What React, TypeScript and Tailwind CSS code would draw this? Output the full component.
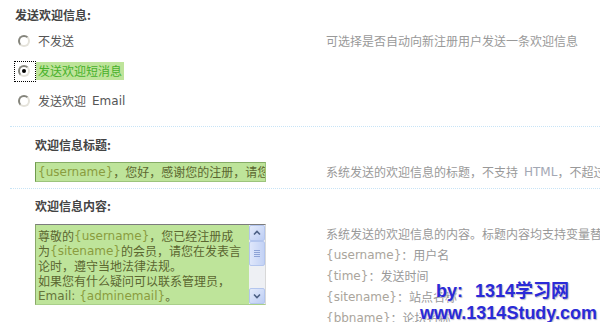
import React from "react";

const cjk = '"Noto Sans CJK SC", "DejaVu Sans", sans-serif';
const latin = '"DejaVu Sans", "Noto Sans CJK SC", sans-serif';

function Radio({ checked }: { checked?: boolean }) {
  return (
    <span className="relative inline-flex w-[12px] h-[12px] shrink-0 rounded-full border-2 border-t-[#85857c] border-l-[#85857c] border-r-[#e4e2da] border-b-[#e4e2da] bg-white items-center justify-center">
      {checked && <span className="block w-[4px] h-[4px] rounded-full bg-black" />}
    </span>
  );
}

function Var({ children, c = "text-[#8a9c3e]" }: { children: React.ReactNode; c?: string }) {
  return (
    <span className={c} style={{ fontFamily: latin }}>
      {children}
    </span>
  );
}

function ScrollBtn({ dir }: { dir: "up" | "down" }) {
  return (
    <div className="w-[16px] h-[16px] shrink-0 rounded-[2px] border border-[#b4c6ee] bg-[linear-gradient(135deg,#e4ebfb,#bccdf4)] flex items-center justify-center">
      <svg width="8" height="6" viewBox="0 0 8 6">
        {dir === "up" ? (
          <path d="M1 4.5 L4 1.5 L7 4.5" fill="none" stroke="#4d6185" strokeWidth="1.6" />
        ) : (
          <path d="M1 1.5 L4 4.5 L7 1.5" fill="none" stroke="#4d6185" strokeWidth="1.6" />
        )}
      </svg>
    </div>
  );
}

function Line({ children }: { children: React.ReactNode }) {
  return <div className="h-[15px] flex items-center">{children}</div>;
}

function RLine({ children }: { children: React.ReactNode }) {
  return <div className="h-[21px] flex items-center">{children}</div>;
}

export default function App() {
  return (
    <div
      className="relative w-[600px] h-[322px] overflow-hidden bg-white text-[12px] whitespace-nowrap"
      style={{ fontFamily: cjk }}
    >
      {/* Section 1 */}
      <div className="ml-[10px] h-[127px] flex border-b border-dotted border-[#c8e4f6]">
        <div className="w-[316px] shrink-0">
          <div className="pl-[5px] pt-[8px] h-[26px] leading-[14px] font-bold text-[#444]">发送欢迎信息:</div>
          <div className="h-[30px] pl-[8px] flex items-center gap-[6px]">
            <Radio />
            <span className="px-[2px] h-[18px] leading-[18px] text-[#555]">不发送</span>
          </div>
          <div className="h-[30px] pl-[8px] flex items-center gap-[6px]">
            <span className="relative inline-flex">
              <Radio checked />
              <span className="absolute left-[-4px] top-[-4px] w-[22px] h-[21px] border border-dotted border-black" />
            </span>
            <span className="px-[2px] h-[18px] leading-[18px] bg-[#bee49a] text-[#47b02a]">发送欢迎短消息</span>
          </div>
          <div className="h-[30px] pl-[8px] flex items-center gap-[6px]">
            <Radio />
            <span className="px-[2px] h-[18px] flex items-center text-[#555]">
              发送欢迎<span style={{ fontFamily: latin }} className="ml-[6px] text-[#555]">Email</span>
            </span>
          </div>
        </div>
        <div className="pt-[26px]">
          <div className="h-[30px] flex items-center text-[#999]">可选择是否自动向新注册用户发送一条欢迎信息</div>
        </div>
      </div>

      {/* Section 2 */}
      <div className="ml-[10px] h-[62px] flex border-b border-dotted border-[#c8e4f6]">
        <div className="w-[316px] shrink-0 pl-[25px]">
          <div className="pt-[11px] leading-[14px] font-bold text-[#444]">欢迎信息标题:</div>
          <div className="mt-[10px] w-[231px] h-[20px] overflow-hidden bg-[#bee49a] border border-[#9cc47c] border-l-[#6f9a4e] border-t-[#86ad66] pl-[2px] flex items-center text-[#5b6630]">
            <Var>{"{username}"}</Var>，您好，感谢您的注册，请您
          </div>
        </div>
        <div className="pt-[38px] text-[#999]">
          <div className="h-[14px] flex items-center">
            系统发送的欢迎信息的标题，不支持
            <span style={{ fontFamily: latin }} className="ml-[6px] text-[#a3a8b4]">HTML</span>
            ，不超过 75 字节
          </div>
        </div>
      </div>

      {/* Section 3 */}
      <div className="ml-[10px] flex">
        <div className="w-[316px] shrink-0 pl-[25px]">
          <div className="pt-[10px] leading-[14px] font-bold text-[#444]">欢迎信息内容:</div>
          <div className="mt-[11px] w-[231px] h-[81px] flex border border-t-[#7c7c7c] border-l-[#8aa86a] border-b-[#a9cf8a] border-r-[#d8d8d8]">
            <div className="flex-1 bg-[#bee49a] pl-[2px] pt-[3px] text-[#5b6630] overflow-hidden">
              <Line>尊敬的<Var>{"{username}"}</Var>，您已经注册成</Line>
              <Line>为<Var>{"{sitename}"}</Var>的会员，请您在发表言</Line>
              <Line>论时，遵守当地法律法规。</Line>
              <Line>如果您有什么疑问可以联系管理员，</Line>
              <Line>
                <Var c="text-[#66753a]">Email:&nbsp;</Var>
                <Var>{"{adminemail}"}</Var>。
              </Line>
            </div>
            <div className="w-[16px] flex flex-col bg-[#eef0f4]">
              <ScrollBtn dir="up" />
              <div className="h-[25px] shrink-0 rounded-[2px] border border-[#b4c6ee] bg-[linear-gradient(90deg,#dfe7fb,#c3d2f5)] flex flex-col items-center justify-center gap-[1px]">
                <span className="block w-[6px] h-px bg-[#8ea3d6]" />
                <span className="block w-[6px] h-px bg-[#8ea3d6]" />
                <span className="block w-[6px] h-px bg-[#8ea3d6]" />
                <span className="block w-[6px] h-px bg-[#8ea3d6]" />
              </div>
              <div className="flex-1" />
              <ScrollBtn dir="down" />
            </div>
          </div>
        </div>
        <div className="pt-[34px] text-[#999]">
          <RLine>系统发送的欢迎信息的内容。标题内容均支持变量替换</RLine>
          <RLine><Var c="text-[#aaa59c]">{"{username}"}</Var>：用户名</RLine>
          <RLine><Var c="text-[#aaa59c]">{"{time}"}</Var>：发送时间</RLine>
          <RLine><Var c="text-[#aaa59c]">{"{sitename}"}</Var>：站点名称</RLine>
          <RLine><Var c="text-[#aaa59c]">{"{bbname}"}</Var>：论坛名称</RLine>
        </div>
      </div>

      {/* Watermark */}
      <div
        className="absolute left-[420px] top-[280px] leading-[22px] text-[18px] font-bold text-[#2a2ad8] [text-shadow:1px_1px_1px_#b8b8c8,-1px_-1px_0_#ffffff]"
        style={{ fontFamily: '"Liberation Sans", "Noto Sans CJK SC", sans-serif' }}
      >
        <div className="pl-[16px]">
          by:<span className="ml-[12px]">1314学习网</span>
        </div>
        <div>www.1314Study.com</div>
      </div>
    </div>
  );
}
